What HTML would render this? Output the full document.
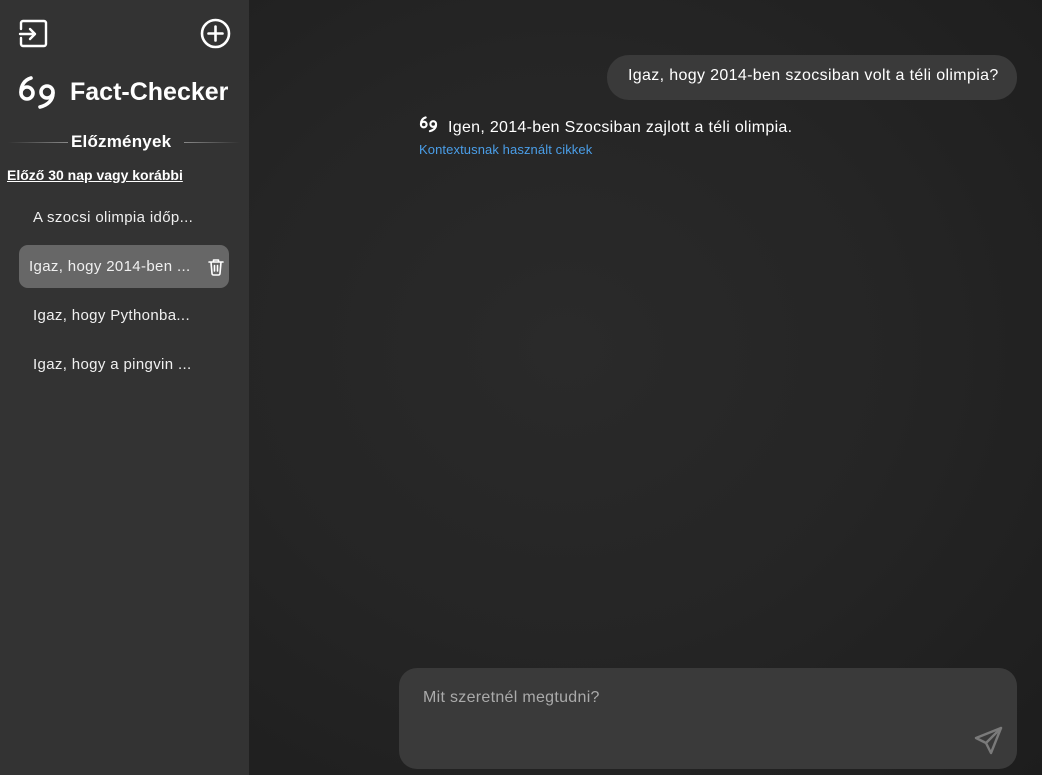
<!DOCTYPE html>
<html><head><meta charset="utf-8"><style>
*{margin:0;padding:0;box-sizing:border-box}
html,body{background:#222}
body{width:1042px;height:775px;overflow:hidden;font-family:"Liberation Sans",sans-serif;color:#fff;position:relative}
.main{position:absolute;left:249px;top:0;width:793px;height:775px;background:radial-gradient(ellipse at 40% 45%,#2a2a2a 0%,#252525 50%,#1d1d1d 100%)}
.side{position:absolute;left:0;top:0;width:249px;height:775px;background:#333}
.abs{position:absolute}
.item{position:absolute;left:33px;font-size:15px;color:#f0f0f0;letter-spacing:0.35px}
</style></head><body>
<div class="main"></div>
<div class="side">
<svg class="abs" style="left:18px;top:19px" width="30" height="30" viewBox="0 0 30 30" fill="none" stroke="#fff" stroke-width="2.4" stroke-linecap="round" stroke-linejoin="round"><path d="M3 10V4a2 2 0 0 1 2-2h21a2 2 0 0 1 2 2v21a2 2 0 0 1-2 2H5a2 2 0 0 1-2-2v-6"/><path d="M2 15h15M12 10l5 5-5 5"/></svg>
<svg class="abs" style="left:200px;top:18px" width="31" height="31" viewBox="0 0 31 31" fill="none" stroke="#fff" stroke-width="2.6" stroke-linecap="round"><circle cx="15.5" cy="15.5" r="13.5"/><path d="M15.5 8.5v14M8.5 15.5h14"/></svg>
<svg class="abs" style="left:18px;top:75px" width="38" height="36" viewBox="0 0 38 36" fill="none" stroke="#fff" stroke-width="3.6" stroke-linecap="round"><path d="M13 3C6 5 3 11 3 17"/><circle cx="9" cy="18" r="6"/><circle cx="29" cy="17" r="6"/><path d="M35 18c0 7-5 12-13 14"/></svg>
<div class="abs" style="left:70px;top:78px;font-size:25px;font-weight:bold">Fact-Checker</div>
<div class="abs" style="left:8px;top:142px;width:60px;height:1px;background:linear-gradient(90deg,transparent,#888)"></div>
<div class="abs" style="left:184px;top:142px;width:56px;height:1px;background:linear-gradient(90deg,#888,transparent)"></div>
<div class="abs" style="left:71px;top:132px;font-size:17px;font-weight:bold;letter-spacing:0.2px">Előzmények</div>
<div class="abs" style="left:7px;top:167px;font-size:14px;font-weight:bold;text-decoration:underline">Előző 30 nap vagy korábbi</div>
<div class="item" style="top:209px">A szocsi olimpia időp...</div>
<div class="abs" style="left:19px;top:245px;width:210px;height:43px;background:#676767;border-radius:9px"></div>
<div class="item" style="left:29px;top:258px">Igaz, hogy 2014-ben ...</div>
<svg class="abs" style="left:208px;top:258px" width="16" height="18" viewBox="0 0 16 18" fill="none" stroke="#fff" stroke-width="1.6" stroke-linecap="round" stroke-linejoin="round"><path d="M1 4h14M5.5 4V2h5v2M3 4l1 11.5a1.5 1.5 0 0 0 1.5 1.5h5a1.5 1.5 0 0 0 1.5-1.5L13 4M6.5 7.5v5.5M9.5 7.5v5.5"/></svg>
<div class="item" style="top:307px">Igaz, hogy Pythonba...</div>
<div class="item" style="top:356px">Igaz, hogy a pingvin ...</div>
</div>
<div class="abs" style="left:607px;top:55px;width:410px;height:45px;background:#3a3a3a;border-radius:22px;font-size:16px;padding:12px 0 0 21px;letter-spacing:0.35px;white-space:nowrap">Igaz, hogy 2014-ben szocsiban volt a téli olimpia?</div>
<svg class="abs" style="left:419px;top:116px" width="19" height="17" viewBox="0 0 38 36" fill="none" stroke="#fff" stroke-width="4.5" stroke-linecap="round"><path d="M13 3C6 5 3 11 3 17"/><circle cx="9" cy="18" r="6"/><circle cx="29" cy="17" r="6"/><path d="M35 18c0 7-5 12-13 14"/></svg>
<div class="abs" style="left:448px;top:119px;font-size:16px;letter-spacing:0.3px">Igen, 2014-ben Szocsiban zajlott a téli olimpia.</div>
<div class="abs" style="left:419px;top:142px;font-size:13px;color:#4a9ee8;letter-spacing:0.1px">Kontextusnak használt cikkek</div>
<div class="abs" style="left:399px;top:668px;width:618px;height:101px;background:#3a3a3a;border-radius:18px"></div>
<div class="abs" style="left:423px;top:689px;font-size:16px;color:#aaa;letter-spacing:0.3px">Mit szeretnél megtudni?</div>
<svg class="abs" style="left:973px;top:726px" width="30" height="30" viewBox="0 0 30 30" fill="none" stroke="#7a7a7a" stroke-width="2.4" stroke-linejoin="round" stroke-linecap="round"><path d="M28 2L3 12l10 5 5 10z"/><path d="M28 2L13 17"/></svg>
</body></html>
